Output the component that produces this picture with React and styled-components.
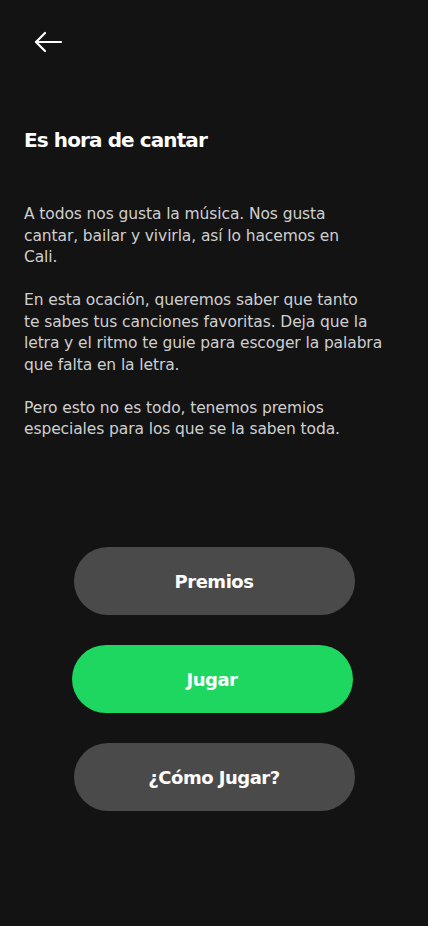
import React from 'react';
import styled, { createGlobalStyle } from 'styled-components';

const GlobalStyle = createGlobalStyle`
  html, body {
    margin: 0;
    padding: 0;
    background: #131313;
  }
  * { box-sizing: border-box; }
`;

const StyledPage = styled.div`
  width: 428px;
  height: 926px;
  overflow: hidden;
  background: #131313;
  font-family: 'DejaVu Sans', 'Open Sans', sans-serif;
  display: flex;
  flex-direction: column;
  padding: 0 24px;
`;

const BackButton = styled.button`
  width: 32px;
  height: 24px;
  margin: 30px 0 0 9px;
  padding: 0;
  border: 0;
  background: none;
  display: flex;
  align-items: center;
  cursor: pointer;
`;

const Title = styled.h1`
  margin: 72px 0 0;
  color: #ffffff;
  font-size: 20px;
  font-weight: 700;
  line-height: 28px;
  letter-spacing: -0.9px;
`;

const Body = styled.div`
  margin-top: 50px;
  color: #cfcfcf;
  font-size: 15.5px;
  line-height: 21.5px;
  letter-spacing: -0.1px;

  p {
    margin: 0 0 21.5px;
  }
`;

const Actions = styled.div`
  margin-top: 85px;
  display: flex;
  flex-direction: column;
  align-items: center;
  gap: 30px;
`;

const PillButton = styled.button`
  width: 281px;
  height: 68px;
  border: 0;
  border-radius: 34px;
  background: ${ props => props.primary ? '#1ed760' : '#4a4a4a' };
  color: #ffffff;
  font-family: inherit;
  font-size: 18px;
  font-weight: 700;
  letter-spacing: -0.5px;
  transform: translateX(${ props => props.primary ? '-2px' : '0' });
  cursor: pointer;
`;

const App = () => {
  return (
    <StyledPage>
      <GlobalStyle />
      <BackButton aria-label='Volver'>
        <svg width='30' height='22' viewBox='0 0 30 22' fill='none'
          stroke='#ffffff' strokeWidth='2.2' strokeLinecap='round' strokeLinejoin='round'>
          <path d='M28 11H3' />
          <path d='M12 2L3 11l9 9' />
        </svg>
      </BackButton>

      <Title>Es hora de cantar</Title>

      <Body>
        <p>
          A todos nos gusta la música. Nos gusta<br />
          cantar, bailar y vivirla, así lo hacemos en<br />
          Cali.
        </p>
        <p>
          En esta ocación, queremos saber que tanto<br />
          te sabes tus canciones favoritas. Deja que la<br />
          letra y el ritmo te guie para escoger la palabra<br />
          que falta en la letra.
        </p>
        <p>
          Pero esto no es todo, tenemos premios<br />
          especiales para los que se la saben toda.
        </p>
      </Body>

      <Actions>
        <PillButton>Premios</PillButton>
        <PillButton primary>Jugar</PillButton>
        <PillButton>¿Cómo Jugar?</PillButton>
      </Actions>
    </StyledPage>
  );
};

export default App;
